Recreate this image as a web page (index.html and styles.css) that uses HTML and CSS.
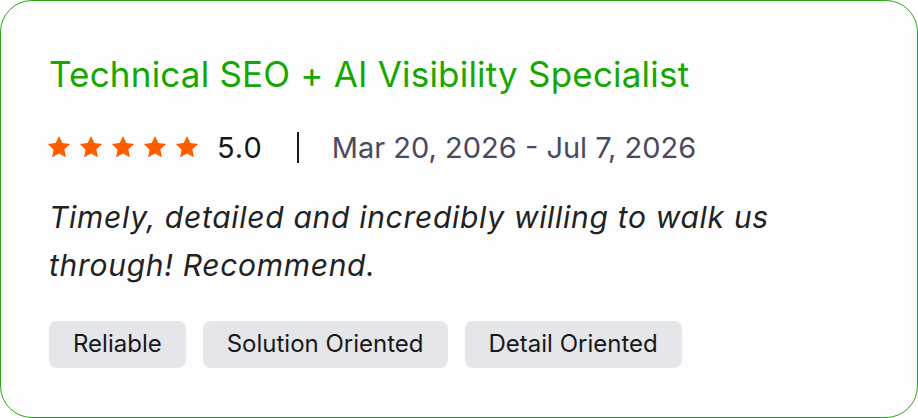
FILE: index.html
```html
<!DOCTYPE html>
<html lang="en">
<head>
  <meta charset="UTF-8" />
  <meta name="viewport" content="width=device-width, initial-scale=1.0" />
  <title>Review</title>
  <link rel="stylesheet" href="styles.css">
</head>
<body>
  <div class="review-card">
    <h2 class="job-title">Technical SEO + AI Visibility Specialist</h2>

    <div class="meta-row">
      <div class="stars">
        <svg viewBox="0 0 24 24"><path d="M12 1.8l3.1 6.6 7.2.9-5.3 5 1.4 7.1L12 17.9l-6.4 3.5 1.4-7.1-5.3-5 7.2-.9z"/></svg>
        <svg viewBox="0 0 24 24"><path d="M12 1.8l3.1 6.6 7.2.9-5.3 5 1.4 7.1L12 17.9l-6.4 3.5 1.4-7.1-5.3-5 7.2-.9z"/></svg>
        <svg viewBox="0 0 24 24"><path d="M12 1.8l3.1 6.6 7.2.9-5.3 5 1.4 7.1L12 17.9l-6.4 3.5 1.4-7.1-5.3-5 7.2-.9z"/></svg>
        <svg viewBox="0 0 24 24"><path d="M12 1.8l3.1 6.6 7.2.9-5.3 5 1.4 7.1L12 17.9l-6.4 3.5 1.4-7.1-5.3-5 7.2-.9z"/></svg>
        <svg viewBox="0 0 24 24"><path d="M12 1.8l3.1 6.6 7.2.9-5.3 5 1.4 7.1L12 17.9l-6.4 3.5 1.4-7.1-5.3-5 7.2-.9z"/></svg>
      </div>
      <span class="score">5.0</span>
      <span class="divider"></span>
      <span class="dates">Mar 20, 2026 - Jul 7, 2026</span>
    </div>

    <p class="feedback">Timely, detailed and incredibly willing to walk us through! Recommend.</p>

    <div class="tags">
      <span class="tag">Reliable</span>
      <span class="tag">Solution Oriented</span>
      <span class="tag">Detail Oriented</span>
    </div>
  </div>
</body>
</html>
```

FILE: styles.css
```css
body {
  margin: 0;
  background: #fff;
  font-family: Inter, "Noto Sans", Arial, sans-serif;
}
.review-card {
  box-sizing: border-box;
  width: 918px;
  height: 418px;
  border: 1px solid #2ea318;
  border-radius: 32px;
  background: #fdfdfd;
  padding: 51px 48px 0 48px;
}
.job-title {
  margin: 0;
  font-size: 35px;
  font-weight: 400;
  line-height: 44px;
  letter-spacing: 0.2px;
  color: #14a800;
}
.meta-row {
  display: flex;
  align-items: center;
  margin-top: 35px;
  height: 32px;
}
.stars {
  display: flex;
  gap: 6px;
  margin-left: -3px;
}
.stars svg {
  width: 26px;
  height: 26px;
  fill: #ff5c00;
}
.score {
  margin-left: 17px;
  font-size: 29px;
  letter-spacing: 1px;
  color: #181818;
}
.divider {
  width: 2px;
  height: 31px;
  background: #181818;
  margin: 0 33px 0 34px;
}
.dates {
  font-size: 29px;
  color: #4b4a60;
}
.feedback {
  margin: 30px 0 0 0;
  font-size: 30px;
  font-style: italic;
  line-height: 48px;
  color: #222;
  letter-spacing: 0.7px;
}
.tags {
  display: flex;
  gap: 17px;
  margin-top: 32px;
}
.tag {
  background: #e4e6ea;
  border-radius: 8px;
  padding: 9px 24px 10px;
  font-size: 24px;
  line-height: 28px;
  color: #181818;
}
```
